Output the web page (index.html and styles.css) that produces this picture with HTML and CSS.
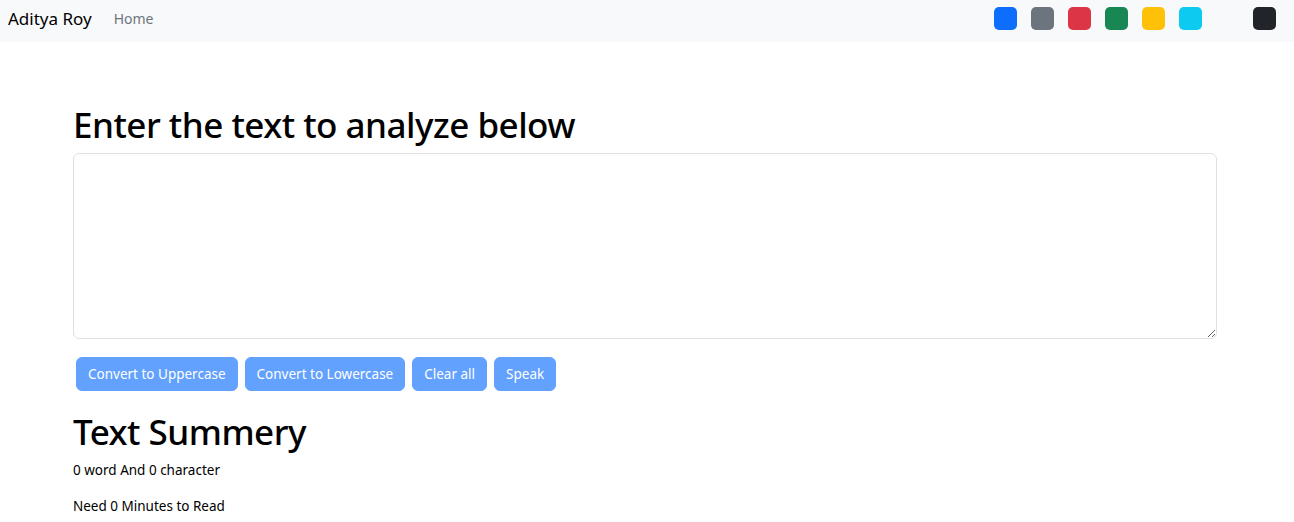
FILE: index.html
```html
<!DOCTYPE html>
<html lang="en">
<head>
<meta charset="utf-8">
<title>TextUtils</title>
<link rel="stylesheet" href="styles.css">
</head>
<body>
<nav class="navbar">
  <a class="brand" href="#">Aditya Roy</a>
  <a class="nav-link" href="#">Home</a>
  <div class="themes">
    <span class="swatch primary"></span>
    <span class="swatch secondary"></span>
    <span class="swatch danger"></span>
    <span class="swatch success"></span>
    <span class="swatch warning"></span>
    <span class="swatch info"></span>
    <span class="swatch light"></span>
    <span class="swatch dark"></span>
  </div>
</nav>
<main class="container">
  <h1 class="title">Enter the text to analyze below</h1>
  <textarea class="box" rows="8"></textarea>
  <div class="actions">
    <button class="btn" disabled>Convert to Uppercase</button>
    <button class="btn" disabled>Convert to Lowercase</button>
    <button class="btn" disabled>Clear all</button>
    <button class="btn" disabled>Speak</button>
  </div>
  <h1 class="title summary">Text Summery</h1>
  <p class="stat">0 word And 0 character</p>
  <p class="stat">Need 0 Minutes to Read</p>
</main>
</body>
</html>
```
FILE: styles.css
```css
* { box-sizing: border-box; }
body {
  margin: 0;
  font-family: "Noto Sans", "Open Sans", sans-serif;
  color: #212529;
  background: #fff;
}
.navbar {
  height: 42px;
  background: #f8f9fa;
  display: flex;
  align-items: center;
  padding: 0 18px 5px 8px;
}
.brand {
  font-size: 17px;
  color: #000;
  text-decoration: none;
  margin-right: 22px;
}
.nav-link {
  font-size: 14px;
  color: #6c757d;
  text-decoration: none;
}
.themes {
  margin-left: auto;
  display: flex;
  gap: 14px;
}
.swatch {
  width: 23px;
  height: 23px;
  border-radius: 5px;
  display: block;
}
.primary { background: #0d6efd; }
.secondary { background: #6c757d; }
.danger { background: #dc3545; }
.success { background: #198754; }
.warning { background: #ffc107; }
.info { background: #0dcaf0; }
.light { background: #f8f9fa; }
.dark { background: #212529; }
.container {
  width: 1144px;
  margin-left: 73px;
  padding-top: 62px;
}
.title {
  font-size: 35px;
  letter-spacing: -0.5px;
  font-weight: 500;
  color: #000;
  margin: 0 0 7px;
  line-height: 1.2;
}
.box {
  display: block;
  width: 100%;
  height: 186px;
  border: 1px solid #dee2e6;
  border-radius: 6px;
  resize: vertical;
  font-family: inherit;
}
.actions {
  display: flex;
  gap: 7px;
  margin: 18px 0 0 3px;
}
.btn {
  font-family: inherit;
  font-size: 13.5px;
  color: #fff;
  background: #62a1fe;
  border: 1px solid #62a1fe;
  border-radius: 6px;
  height: 34px;
  padding: 0 11px;
}
.summary {
  margin: 20px 0 8px;
}
.stat {
  font-size: 13.5px;
  margin: 0 0 18px;
  color: #000;
}
```
